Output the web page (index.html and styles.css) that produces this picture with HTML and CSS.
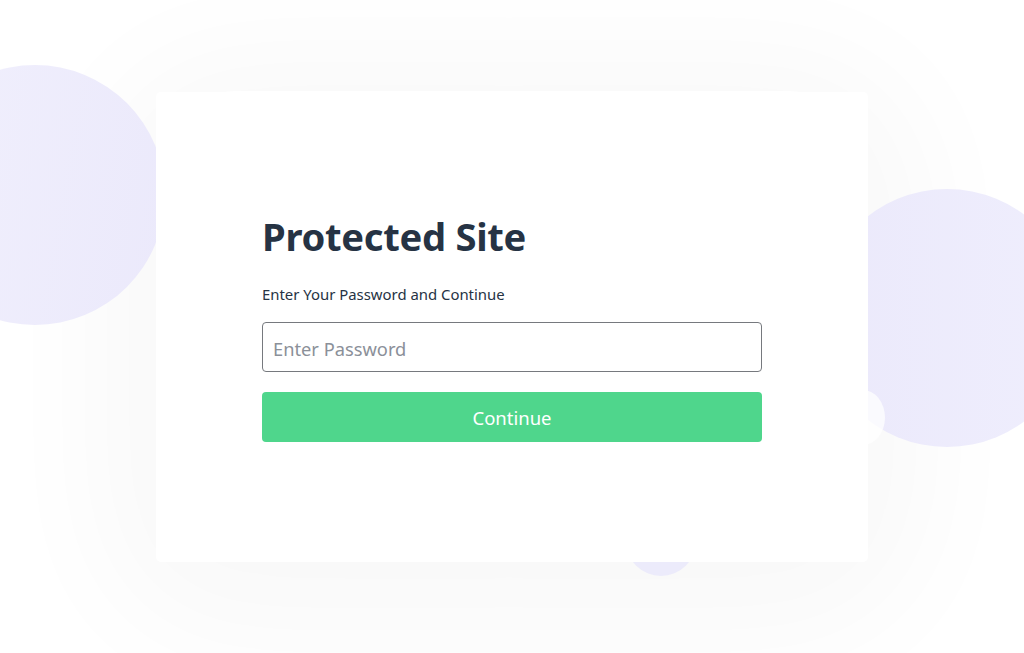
FILE: index.html
```html
<!DOCTYPE html>
<html lang="en">
<head>
<meta charset="utf-8">
<title>Protected Site</title>
<link rel="stylesheet" href="styles.css">
</head>
<body>
<div class="stage">
  <div class="blob blob-left"></div>
  <div class="blob blob-right"></div>
  <div class="blob blob-dot"></div>
  <div class="blob blob-bottom"></div>
  <main class="card">
    <form class="form">
      <h1 class="title">Protected Site</h1>
      <p class="subtitle">Enter Your Password and Continue</p>
      <input class="field" type="password" placeholder="Enter Password">
      <button class="btn" type="button">Continue</button>
    </form>
  </main>
</div>
</body>
</html>
```

FILE: styles.css
```css
* { box-sizing: border-box; }
html, body { margin: 0; height: 100%; }
body {
  background: #ffffff;
  font-family: "Noto Sans", "Open Sans", sans-serif;
  overflow: hidden;
}
.stage {
  position: relative;
  height: 100%;
  overflow: hidden;
  display: flex;
  align-items: center;
  justify-content: center;
}
.stage::before {
  content: "";
  position: absolute;
  left: 156px;
  top: 91px;
  width: 712px;
  height: 470px;
  border-radius: 80px;
  box-shadow: 0 20px 120px 60px rgba(0, 0, 0, 0.028);
}
.blob {
  position: absolute;
  border-radius: 50%;
}
.blob-left {
  left: -95px;
  top: 65px;
  width: 260px;
  height: 260px;
  background: linear-gradient(100deg, #f1f0fd, #ebe9fb);
}
.blob-right {
  left: 818px;
  top: 189px;
  width: 258px;
  height: 258px;
  background: linear-gradient(90deg, #ebe9fb, #efeefd);
}
.blob-dot {
  left: 840px;
  top: 390px;
  width: 45px;
  height: 55px;
  background: rgba(255, 255, 255, 0.75);
}
.blob-bottom {
  left: 626px;
  top: 506px;
  width: 70px;
  height: 70px;
  background: #ecebfb;
}
.card {
  position: relative;
  width: 712px;
  height: 470px;
  background: #ffffff;
  border-radius: 5px;
  display: flex;
  justify-content: center;
  padding-top: 121px;
}
.form {
  width: 500px;
  display: flex;
  flex-direction: column;
}
.title {
  margin: 0;
  font-size: 38.2px;
  font-weight: 700;
  color: #263344;
  line-height: 46px;
  letter-spacing: -0.3px;
}
.subtitle {
  margin: 26px 0 18.6px;
  font-size: 14.9px;
  color: #263344;
  line-height: 18.85px;
}
.field {
  height: 50px;
  border: 1px solid #76797e;
  border-radius: 4px;
  padding: 3px 10px 0;
  font-family: inherit;
  font-size: 18.3px;
  color: #333;
  outline: none;
}
.field::placeholder { color: #8b9099; }
.btn {
  margin-top: 20px;
  height: 50px;
  border: none;
  border-radius: 4px;
  padding-top: 2px;
  background: #4fd68c;
  color: #ffffff;
  font-family: inherit;
  font-size: 18.5px;
  cursor: pointer;
}
```
